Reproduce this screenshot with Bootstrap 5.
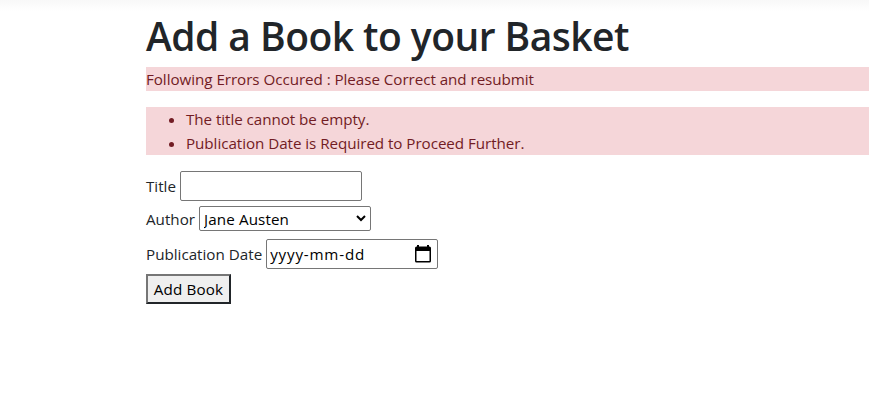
<!DOCTYPE html>
<html lang="en">
<head>
<meta charset="utf-8">
<meta name="viewport" content="width=device-width, initial-scale=1">
<title>Add a Book to your Basket</title>
<link href="https://cdn.jsdelivr.net/npm/bootstrap@5.3.0/dist/css/bootstrap.min.css" rel="stylesheet">
<style>
body{font-family:"Open Sans","Noto Sans",sans-serif;font-size:15.2px;line-height:24px;color:#212529;overflow:hidden}
.top-shade{height:11px;background:linear-gradient(#f8f8f8,#fff)}
.page{margin-left:146px}
.page h1{font-size:39px;line-height:46px;padding-top:2px;font-weight:600;letter-spacing:-.54px;white-space:nowrap}
.errors{background:#f5d6d9;color:#721c24;letter-spacing:-.05px}
ul.errors{padding-left:40px}
.field{gap:4px}
.field label{white-space:nowrap}
.row-author,.submit{margin-top:5px}
.row-date{margin-top:8px}
.box{border:1px solid #767676;border-radius:2px;background:#fff;color:#000}
.box input,.box select{border:0;outline:0;background:none;appearance:none;color:#000;padding:0;min-width:0;font:inherit}
.box-title{width:182px;height:30px}
.box-author{width:172px;height:25px;padding:0 4px}
.box-author select{letter-spacing:.12px}
.box-date{width:172px;height:30px;padding:0 6px 0 3px}
.box-date input{letter-spacing:.8px}
.submit{width:85px;height:30px;border:2px solid;border-color:#767676 #212529 #212529 #767676;background:#efefef;color:#000;padding:0;line-height:26px;letter-spacing:.15px;white-space:nowrap}
</style>
</head>
<body>
<div class="top-shade"></div>
<main class="page">
  <h1 class="mb-2">Add a Book to your Basket</h1>
  <p class="errors mb-3">Following Errors Occured : Please Correct and resubmit</p>
  <ul class="errors mb-3">
    <li>The title cannot be empty.</li>
    <li>Publication Date is Required to Proceed Further.</li>
  </ul>
  <form>
    <div class="field d-flex align-items-center">
      <label for="title">Title</label>
      <div class="box box-title d-flex"><input class="w-100" id="title" type="text"></div>
    </div>
    <div class="field d-flex align-items-center row-author">
      <label for="author">Author</label>
      <div class="box box-author d-flex align-items-center">
        <select id="author" class="flex-grow-1"><option>Jane Austen</option></select>
        <svg width="10" height="7" viewBox="0 0 10 7" fill="none" stroke="#000" stroke-width="2"><path d="M1 1l4 4 4-4"/></svg>
      </div>
    </div>
    <div class="field d-flex align-items-center row-date">
      <label for="date">Publication Date</label>
      <div class="box box-date d-flex align-items-center">
        <input id="date" class="flex-grow-1" type="text" value="yyyy-mm-dd">
        <svg class="flex-shrink-0" width="16" height="18" viewBox="0 0 16 18"><path fill="#000" fill-rule="evenodd" d="M2 0h2v1.500h8V0h2v1.500h.5Q16 1.500 16 3V16q0 1.500-1.500 1.500h-13Q0 17.500 0 16V3Q0 1.500 1.500 1.500H2zM1.500 6v10h13V6z"/></svg>
      </div>
    </div>
    <button type="button" class="submit d-block">Add Book</button>
  </form>
</main>
<script src="https://cdn.jsdelivr.net/npm/bootstrap@5.3.0/dist/js/bootstrap.bundle.min.js"></script>
</body>
</html>
